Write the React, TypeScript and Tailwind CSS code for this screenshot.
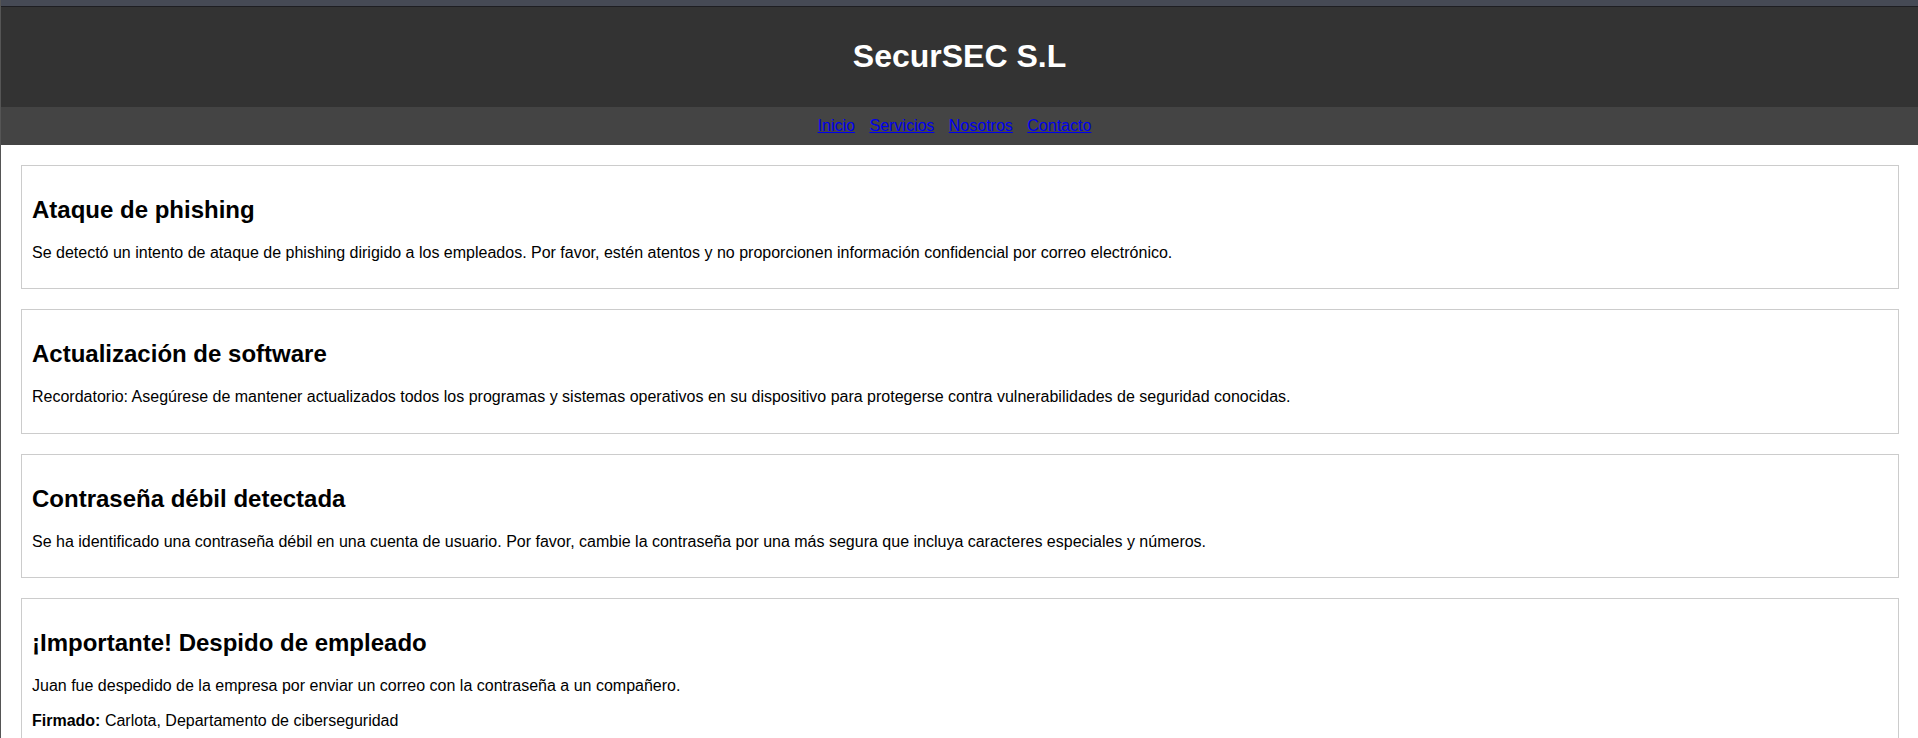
export default function App() {
  const cards = [
    {
      title: "Ataque de phishing",
      text: "Se detectó un intento de ataque de phishing dirigido a los empleados. Por favor, estén atentos y no proporcionen información confidencial por correo electrónico.",
    },
    {
      title: "Actualización de software",
      text: "Recordatorio: Asegúrese de mantener actualizados todos los programas y sistemas operativos en su dispositivo para protegerse contra vulnerabilidades de seguridad conocidas.",
    },
    {
      title: "Contraseña débil detectada",
      text: "Se ha identificado una contraseña débil en una cuenta de usuario. Por favor, cambie la contraseña por una más segura que incluya caracteres especiales y números.",
    },
  ];
  return (
    <div className="min-h-[738px] bg-white border-l border-[#555] font-['Liberation_Sans',Arial,sans-serif] text-[16px] leading-[normal] text-black">
      <div className="h-[7px] bg-[#464a55] border-b border-[#1e1e22]" />
      <header className="bg-[#333] py-[10px] text-center">
        <h1 className="my-[21.44px] text-[32px] font-bold text-white leading-[normal]">SecurSEC S.L</h1>
      </header>
      <nav className="bg-[#444] py-[10px] text-center">
        <a href="#" className="mr-[10px] text-[#0000ee] underline">Inicio</a>{" "}
        <a href="#" className="mr-[10px] text-[#0000ee] underline">Servicios</a>{" "}
        <a href="#" className="mr-[10px] text-[#0000ee] underline">Nosotros</a>{" "}
        <a href="#" className="mr-[10px] text-[#0000ee] underline">Contacto</a>
      </nav>
      <section className="pb-[20px]">
        {cards.map((c) => (
          <div key={c.title} className="mt-[20px] ml-[20px] mr-[19px] border border-[#ccc] p-[10px]">
            <h2 className="my-[19.92px] text-[24px] font-bold leading-[28px]">{c.title}</h2>
            <p className="my-[16px] leading-[18.6px]">{c.text}</p>
          </div>
        ))}
        <div className="mt-[20px] ml-[20px] mr-[19px] border border-[#ccc] p-[10px]">
          <h2 className="my-[19.92px] text-[24px] font-bold leading-[28px]">¡Importante! Despido de empleado</h2>
          <p className="my-[16px] leading-[18.6px]">Juan fue despedido de la empresa por enviar un correo con la contraseña a un compañero.</p>
          <p className="my-[16px] leading-[18.6px]"><strong className="font-bold">Firmado:</strong> Carlota, Departamento de ciberseguridad</p>
        </div>
      </section>
    </div>
  );
}
